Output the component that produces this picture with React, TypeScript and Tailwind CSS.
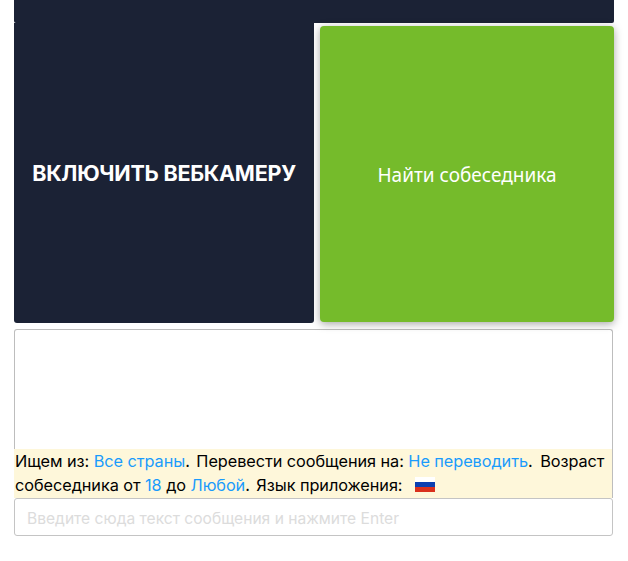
export default function App() {
  return (
    <div className="w-[628px] h-[561px] bg-white font-['Inter','Open_Sans',sans-serif] text-black overflow-hidden">
      <div className="ml-[14px] w-[600px]">
        <div className="h-[23px] bg-[#1b2235] rounded-b-[2px]" />
        <div className="flex h-[300px]">
          <div className="w-[300px] h-full bg-[#1b2235] rounded-b-[3px] flex items-center justify-center">
            <span className="text-white font-bold text-[21.5px] tracking-[-0.25px]">ВКЛЮЧИТЬ ВЕБКАМЕРУ</span>
          </div>
          <div className="ml-[6px] mt-[3px] w-[294px] h-[296px] bg-[#75bb2b] rounded-[4px] shadow-[0_2px_8px_rgba(0,0,0,0.35)] flex items-center justify-center pt-[2px]">
            <span className="font-['Noto_Sans',sans-serif] text-white text-[19px]">Найти собеседника</span>
          </div>
        </div>
        <div className="mt-[6px] w-[599px] h-[169px] border border-b-0 border-[#bdbdbd] rounded-t-[3px] flex flex-col justify-end">
          <div className="bg-[#fef7da] -mx-px w-[598px] text-[16.3px] leading-[24px] h-[49px] tracking-[-0.06px]">
            <p className="ml-px whitespace-nowrap">
              Ищем из: <a className="text-[#1a9bfc]">Все страны</a>.<span className="ml-[2px]"> Перевести сообщения на: </span><a className="text-[#1a9bfc]">Не переводить</a>.<span className="ml-[3px]"> Возраст</span>
            </p>
            <p className="ml-px whitespace-nowrap flex items-center">
              <span className="whitespace-pre">собеседника от <a className="text-[#1a9bfc]">18</a> до <a className="text-[#1a9bfc]">Любой</a>.<span className="ml-[2px]"> Язык приложения: </span></span>
              <svg className="ml-[8px] -mt-[2px]" width="20" height="15" viewBox="0 0 20 15">
                <rect width="20" height="5" fill="#ffffff" />
                <rect y="5" width="20" height="5" fill="#0b3fb0" />
                <rect y="10" width="20" height="5" fill="#d9301c" />
              </svg>
            </p>
          </div>
        </div>
        <input
          placeholder="Введите сюда текст сообщения и нажмите Enter"
          className="block w-[599px] h-[38px] border border-[#c4c4c4] rounded-[3px] px-[12px] pt-[2px] text-[15.6px] outline-none placeholder:text-[#dcdcdc]"
        />
      </div>
    </div>
  );
}
